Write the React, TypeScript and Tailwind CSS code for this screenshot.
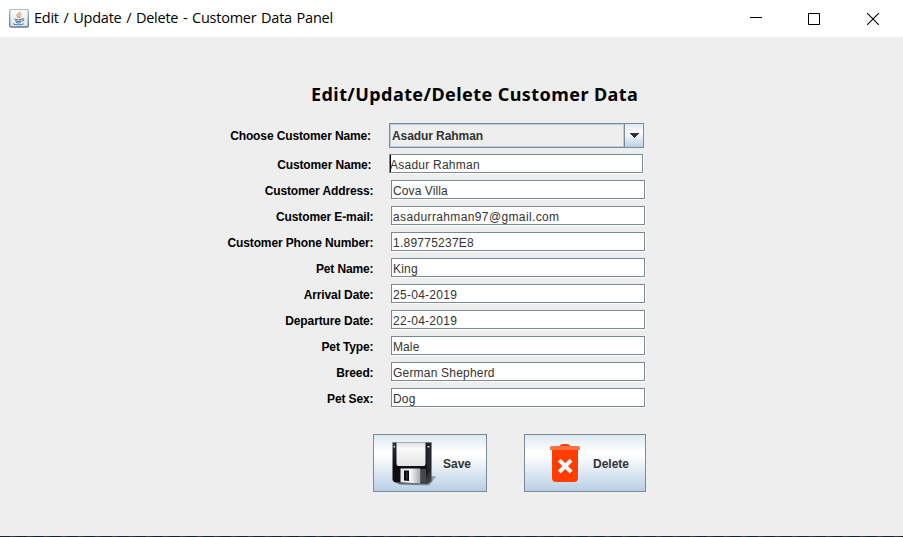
import React from "react";

const fields = [
  { label: "Customer Address:", value: "Cova Villa", spacing: "tracking-[0.1px]" },
  { label: "Customer E-mail:", value: "asadurrahman97@gmail.com", spacing: "tracking-[0.37px]" },
  { label: "Customer Phone Number:", value: "1.89775237E8", spacing: "tracking-[0.24px]" },
  { label: "Pet Name:", value: "King", spacing: "tracking-[0.2px]" },
  { label: "Arrival Date:", value: "25-04-2019", spacing: "tracking-[0.28px]" },
  { label: "Departure Date:", value: "22-04-2019", spacing: "tracking-[0.28px]" },
  { label: "Pet Type:", value: "Male", spacing: "tracking-[0.1px]" },
  { label: "Breed:", value: "German Shepherd", spacing: "tracking-[0.2px]" },
  { label: "Pet Sex:", value: "Dog", spacing: "tracking-[0.2px]" },
];

function JavaIcon() {
  return (
    <svg width="20" height="20" viewBox="0 0 20 20">
      <defs>
        <linearGradient id="tile" x1="0" y1="0" x2="0" y2="1">
          <stop offset="0" stopColor="#fdfdfd" />
          <stop offset="1" stopColor="#dfe3e8" />
        </linearGradient>
        <linearGradient id="edge" x1="0" y1="0" x2="0" y2="1">
          <stop offset="0" stopColor="#a9c0d4" />
          <stop offset="1" stopColor="#56789b" />
        </linearGradient>
      </defs>
      <rect x="0.7" y="0.2" width="18.6" height="17.8" rx="1.5" fill="url(#tile)" stroke="url(#edge)" strokeWidth="1.4" />
      <path d="M11 2.600c.7 1.600-3 2.400-3 4 0 .9 1.300 1.400 1.500 2.200M12.500 4.800c-1.500.7-2.200 1.300-2 2.200.1.700.9 1.100.2 2.100" fill="none" stroke="#e99a52" strokeWidth="1.4" />
      <path d="M5.300 10c2 .8 6 .8 8 0M6.300 11.700c1.500.8 4.600.8 6.200 0M7 13.300c1.300.6 3.600.6 4.800 0M13.300 10c2.200-.6 2 1.500-.5 2.300M4 14.700c2 1.300 8.500 1.300 10.800 0" fill="none" stroke="#5f86a8" strokeWidth="1.1" />
    </svg>
  );
}

function FloppyIcon() {
  return (
    <svg width="46" height="46" viewBox="0 0 46 46">
      <defs>
        <linearGradient id="body" x1="0" y1="0" x2="1" y2="1">
          <stop offset="0" stopColor="#34393f" />
          <stop offset="0.3" stopColor="#0b0c0e" />
          <stop offset="0.75" stopColor="#111316" />
          <stop offset="1" stopColor="#4e5358" />
        </linearGradient>
        <linearGradient id="paper" x1="0" y1="0" x2="0" y2="1">
          <stop offset="0" stopColor="#dedfdf" />
          <stop offset="0.25" stopColor="#fafafa" />
          <stop offset="1" stopColor="#e2e3e4" />
        </linearGradient>
        <linearGradient id="metal" x1="0" y1="0" x2="1" y2="0">
          <stop offset="0" stopColor="#e6e6e6" />
          <stop offset="0.5" stopColor="#f8f8f8" />
          <stop offset="1" stopColor="#a3a6a9" />
        </linearGradient>
        <linearGradient id="cast" x1="0" y1="0" x2="1" y2="0">
          <stop offset="0" stopColor="#42484f" />
          <stop offset="1" stopColor="#8495a5" />
        </linearGradient>
      </defs>
      <path d="M3 42l6 2.500 29 1 7-9-8-1z" fill="url(#cast)" opacity="0.85" />
      <path d="M1.500 2.500h39v39l-4 2.500-33.500-2-1.500-2z" fill="url(#body)" />
      <path d="M1.500 2h39v1h-39z" fill="#72777b" />
      <path d="M5.500 2.500h29v21.500q0 2-2 2h-25q-2 0-2-2z" fill="url(#paper)" />
      <path d="M35.500 3h4.500v24l-4 4z" fill="#24282c" />
      <path d="M2.500 6H4v1.500H2.500zM36.500 6h2v1.500h-2z" fill="#cbd1d5" />
      <path d="M9.500 28.500h20v15l-20-1.200z" fill="url(#metal)" />
      <path d="M30 29h5v14l-5-.5z" fill="#42484e" />
      <path d="M13 30.500h5v10.500l-5-.4z" fill="#08090a" />
      <path d="M15 31.500h1.500v8H15z" fill="#30343a" />
    </svg>
  );
}

function TrashIcon() {
  return (
    <svg width="30" height="38" viewBox="0 0 30 38">
      <path d="M9.500 2.500Q10 0 12.500 0h5Q20 0 20.500 2.500z" fill="#ff3d00" />
      <path d="M2 6h26v28q0 4-4 4H6q-4 0-4-4z" fill="#ff3d00" />
      <path d="M1.500 2h27Q30 2 30 3.500V6H0V3.500Q0 2 1.500 2z" fill="#ff7043" />
      <path d="M9.300 16.200l11.800 11.800M21.100 16.200L9.300 28" stroke="#fafafa" strokeWidth="4" />
    </svg>
  );
}

type FieldProps = { label: string; value: string; spacing: string; first?: boolean };

function Field({ label, value, spacing, first = false }: FieldProps) {
  return (
    <div className="flex h-[19px] shrink-0 items-start">
      <span className="w-[160.500px] whitespace-nowrap pt-[2px] text-right text-xs font-bold leading-[19px] tracking-[-0.12px] text-black">
        {label}
      </span>
      <div
        className={`ml-[17.500px] flex h-[19px] w-[254px] items-start border border-[#7a8a99] bg-white text-xs text-[#333] shadow-[1px_1px_0_#fff] ${spacing} ${first ? "" : "pl-px"}`}
      >
        {first && <i className="-mr-px h-[17px] w-px bg-black" />}
        <span className="pt-px leading-[19px]">{value}</span>
      </div>
    </div>
  );
}

const buttonClass =
  "flex h-[58px] items-center border border-[#7a8a99] bg-[linear-gradient(180deg,#dde8f3_0%,#ffffff_30%,#ffffff_36%,#b8cfe5_100%)] text-xs font-bold text-[#333]";

export default function App() {
  return (
    <div className="flex h-[537px] w-[903px] flex-col overflow-hidden bg-[#eee] font-['Liberation_Sans',Arial,sans-serif]">
      <header className="flex h-[37px] shrink-0 items-center bg-white pl-[9px]">
        <JavaIcon />
        <span className="ml-[5px] whitespace-nowrap pb-[2px] font-['Open_Sans','Noto_Sans',sans-serif] text-[14.500px] leading-5 tracking-[-0.25px] text-black [word-spacing:1.2px]">
          Edit / Update / Delete - Customer Data Panel
        </span>
        <div className="ml-auto flex items-center pr-[24px]">
          <svg className="mr-[46px]" width="12" height="12" viewBox="0 0 12 12"><path d="M0 4.500h12" stroke="#000" /></svg>
          <svg className="mr-[47px]" width="12" height="12" viewBox="0 0 12 12"><path d="M.5.5h11v11H.5z" fill="none" stroke="#000" /></svg>
          <svg width="12" height="12" viewBox="0 0 12 12"><path d="M0 0l12 12M12 0L0 12" stroke="#000" strokeWidth="1.1" /></svg>
        </div>
      </header>
      <main className="flex flex-1 flex-col">
        <h1 className="ml-[311px] mt-[45px] h-6 whitespace-nowrap font-['Noto_Sans','Open_Sans',sans-serif] text-lg font-bold leading-6 tracking-[0.43px] text-black">
          Edit/Update/Delete Customer Data
        </h1>
        <div className="ml-[211px] mt-[17px] flex h-[25px] items-center">
          <span className="w-[160px] whitespace-nowrap text-right text-xs font-bold tracking-[-0.12px] text-black">Choose Customer Name:</span>
          <div className="ml-[18px] flex h-[25px] w-[255px] border border-[#7a8a99] bg-[#eee]">
            <div className="flex flex-1 items-center border border-[#b8cfe5] pl-px text-xs font-bold tracking-[-0.08px] text-[#333]">Asadur Rahman</div>
            <div className="flex w-[19px] items-center justify-center border-l border-[#7a8a99] bg-[linear-gradient(180deg,#dde8f3_0%,#fff_35%,#b8cfe5_100%)]">
              <svg width="10" height="5" viewBox="0 0 10 5" shapeRendering="crispEdges"><path d="M0 0h10L5 5z" fill="#333" /></svg>
            </div>
          </div>
        </div>
        <div className="ml-[211px] mt-[6px]">
          <Field label="Customer Name:" value="Asadur Rahman" spacing="tracking-[0.24px]" first />
        </div>
        <div className="ml-[213px] mt-[7px] flex flex-col gap-[7px]">
          {fields.map((field) => (
            <Field key={field.label} {...field} />
          ))}
        </div>
        <div className="ml-[373px] mt-[27px] flex gap-[37px]">
          <button className={`${buttonClass} w-[114px] pl-[17px]`}>
            <FloppyIcon />
            <span className="ml-[6px] pt-[2px]">Save</span>
          </button>
          <button className={`${buttonClass} w-[122px] pl-[25px]`}>
            <TrashIcon />
            <span className="ml-[13px] pt-[2px]">Delete</span>
          </button>
        </div>
      </main>
      <footer className="h-px shrink-0 bg-[repeating-linear-gradient(90deg,#14212e_0px,#14212e_9px,#3f3c38_11px,#182b3c_17px)]" />
    </div>
  );
}
